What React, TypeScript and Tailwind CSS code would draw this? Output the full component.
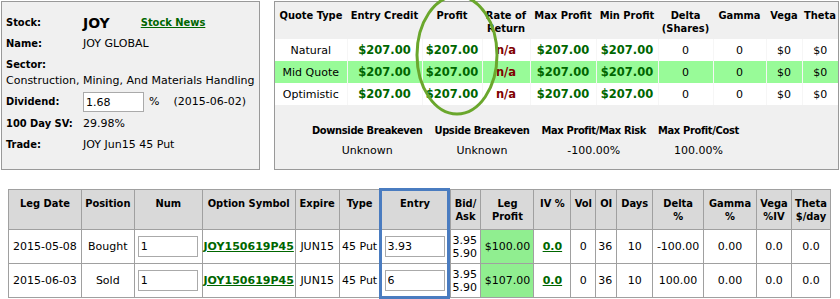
import React from "react";

const GREEN = "text-[#006600]";
const COND = "font-['DejaVu_Sans_Condensed',Verdana,sans-serif]";

const quoteRows = [
  { type: "Natural", hl: false },
  { type: "Mid Quote", hl: true },
  { type: "Optimistic", hl: false },
];

const quoteHeads: [string[], number][] = [
  [["Quote Type"], 72],
  [["Entry Credit"], 75],
  [["Profit"], 60],
  [["Rate of", "Return"], 48],
  [["Max Profit"], 66],
  [["Min Profit"], 62],
  [["Delta", "(Shares)"], 55],
  [["Gamma"], 53],
  [["Vega"], 36],
  [["Theta"], 36],
];

const legHeads: [string[], number][] = [
  [["Leg Date"], 73],
  [["Position"], 53],
  [["Num"], 68],
  [["Option Symbol"], 93],
  [["Expire"], 44],
  [["Type"], 41],
  [["Entry"], 70],
  [["Bid/", "Ask"], 31],
  [["Leg", "Profit"], 53],
  [["IV %"], 37],
  [["Vol"], 25],
  [["OI"], 21],
  [["Days"], 36],
  [["Delta", "%"], 51],
  [["Gamma", "%"], 53],
  [["Vega", "%IV"], 35],
  [["Theta", "$/day"], 39],
];

const legs = [
  { date: "2015-05-08", pos: "Bought", entry: "3.93", profit: "$100.00", delta: "-100.00" },
  { date: "2015-06-03", pos: "Sold", entry: "6", profit: "$107.00", delta: "100.00" },
];

function Lines({ lines }: { lines: string[] }) {
  return (
    <>
      {lines.map((t, i) => (
        <div key={i} className="whitespace-nowrap">
          {t}
        </div>
      ))}
    </>
  );
}

function StockPanel() {
  const label = `w-[77px] font-bold ${COND}`;
  return (
    <div className="w-[259px] h-[169px] border border-[#999] bg-[#f0f0f0] px-[4px] pt-[12px] text-[11px] leading-[14px]">
      <div className="flex items-center h-[18px]">
        <span className={label}>Stock:</span>
        <span className="font-bold text-[14px]">JOY</span>
        <a className={`ml-[31px] font-bold underline ${COND} ${GREEN}`}>Stock News</a>
      </div>
      <div className="flex mt-[5px]">
        <span className={label}>Name:</span>
        <span>JOY GLOBAL</span>
      </div>
      <div className={`mt-[7px] font-bold ${COND}`}>Sector:</div>
      <div className="mt-[2px] whitespace-nowrap">Construction, Mining, And Materials Handling</div>
      <div className="flex items-center mt-[4px]">
        <span className={label}>Dividend:</span>
        <input
          readOnly
          value="1.68"
          className="w-[61px] h-[20px] border border-[#aaa] bg-white px-[2px] text-[11px] outline-none"
        />
        <span className="ml-[5px]">%</span>
        <span className="ml-[14px]">(2015-06-02)</span>
      </div>
      <div className="flex mt-[5px]">
        <span className={label}>100 Day SV:</span>
        <span>29.98%</span>
      </div>
      <div className="flex mt-[7px]">
        <span className={label}>Trade:</span>
        <span>JOY Jun15 45 Put</span>
      </div>
    </div>
  );
}

function QuotePanel() {
  const sep = "border-r border-[#f6f6f6]";
  const money = `text-center font-bold text-[11.5px] ${sep} ${GREEN}`;
  return (
    <div className="relative w-[565px] h-[169px] border border-[#999] bg-[#f0f0f0] text-[11px] leading-[13px]">
      <table className="table-fixed border-collapse">
        <colgroup>
          {quoteHeads.map(([h, w]) => (
            <col key={h.join()} style={{ width: w }} />
          ))}
        </colgroup>
        <thead>
          <tr className="h-[37px]">
            {quoteHeads.map(([h]) => (
              <th key={h.join()} className={`align-top pt-[7px] font-bold text-center px-0 ${COND}`}>
                <Lines lines={h} />
              </th>
            ))}
          </tr>
        </thead>
        <tbody>
          {quoteRows.map((r) => (
            <tr key={r.type} className={`h-[22px] ${r.hl ? "bg-[#98fb98]" : "bg-white"}`}>
              <td className={`text-center ${sep}`}>{r.type}</td>
              <td className={money}>$207.00</td>
              <td className={money}>$207.00</td>
              <td className={`text-center font-bold text-[11.5px] text-[#800000] ${sep}`}>n/a</td>
              <td className={money}>$207.00</td>
              <td className={money}>$207.00</td>
              <td className={`text-center ${sep}`}>0</td>
              <td className={`text-center ${sep}`}>0</td>
              <td className={`text-center ${sep}`}>$0</td>
              <td className="text-center">$0</td>
            </tr>
          ))}
        </tbody>
      </table>
      <table className="ml-[31px] mt-[19px] border-collapse">
        <tbody>
          <tr>
            {["Downside Breakeven", "Upside Breakeven", "Max Profit/Max Risk", "Max Profit/Cost"].map((h) => (
              <th
                key={h}
                className={`font-bold px-[6px] text-center whitespace-nowrap tracking-[-0.35px] ${COND}`}
              >
                {h}
              </th>
            ))}
          </tr>
          <tr>
            {["Unknown", "Unknown", "-100.00%", "100.00%"].map((v, i) => (
              <td key={i} className="text-center pt-[7px]">
                {v}
              </td>
            ))}
          </tr>
        </tbody>
      </table>
      <svg className="absolute left-[137px] top-[-9px] pointer-events-none" width="90" height="124">
        <ellipse cx="45" cy="62" rx="40" ry="59" fill="none" stroke="#6aa72c" strokeWidth="3" />
      </svg>
    </div>
  );
}

function LegTable() {
  const cell = "border border-[#a0a0a0] text-center px-0";
  const input = "w-[60px] h-[21px] border border-[#aaa] px-[2px] text-[11px] outline-none block";
  return (
    <div className="relative ml-[8px] mt-[19px] w-[823px]">
      <table className="table-fixed border-collapse text-[11px] leading-[13px]">
        <colgroup>
          {legHeads.map(([h, w]) => (
            <col key={h.join()} style={{ width: w }} />
          ))}
        </colgroup>
        <thead>
          <tr className="h-[40px] bg-[#d9d9d9]">
            {legHeads.map(([h]) => (
              <th key={h.join()} className={`${cell} align-top pt-[7px] font-bold ${COND}`}>
                <Lines lines={h} />
              </th>
            ))}
          </tr>
        </thead>
        <tbody>
          {legs.map((l) => (
            <tr key={l.date} className="h-[34px] bg-white">
              <td className={cell}>{l.date}</td>
              <td className={cell}>{l.pos}</td>
              <td className={cell}>
                <input readOnly value="1" className={`ml-[3px] ${input}`} />
              </td>
              <td className={cell}>
                <a className={`font-bold underline ${GREEN}`}>JOY150619P45</a>
              </td>
              <td className={cell}>JUN15</td>
              <td className={`${cell} whitespace-nowrap`}>45 Put</td>
              <td className={cell}>
                <input readOnly value={l.entry} className={`ml-[4px] ${input}`} />
              </td>
              <td className={`${cell} text-left pl-[2px]`}>
                3.95
                <br />
                5.90
              </td>
              <td className={`${cell} bg-[#90ee90]`}>{l.profit}</td>
              <td className={cell}>
                <a className={`font-bold underline ${GREEN}`}>0.0</a>
              </td>
              <td className={cell}>0</td>
              <td className={`${cell} text-left pl-[2px]`}>36</td>
              <td className={cell}>10</td>
              <td className={cell}>{l.delta}</td>
              <td className={cell}>0.00</td>
              <td className={cell}>0.0</td>
              <td className={cell}>0.0</td>
            </tr>
          ))}
        </tbody>
      </table>
      <div className="absolute left-[371px] top-[-1px] w-[71px] h-[111px] border-[3px] border-[#4a7cc0] pointer-events-none" />
    </div>
  );
}

export default function App() {
  return (
    <div
      className="w-[840px] h-[299px] overflow-hidden bg-white text-black"
      style={{ fontFamily: '"DejaVu Sans", Verdana, sans-serif' }}
    >
      <div className="flex pt-[1px] pl-[1px] gap-[14px]">
        <StockPanel />
        <QuotePanel />
      </div>
      <LegTable />
    </div>
  );
}
